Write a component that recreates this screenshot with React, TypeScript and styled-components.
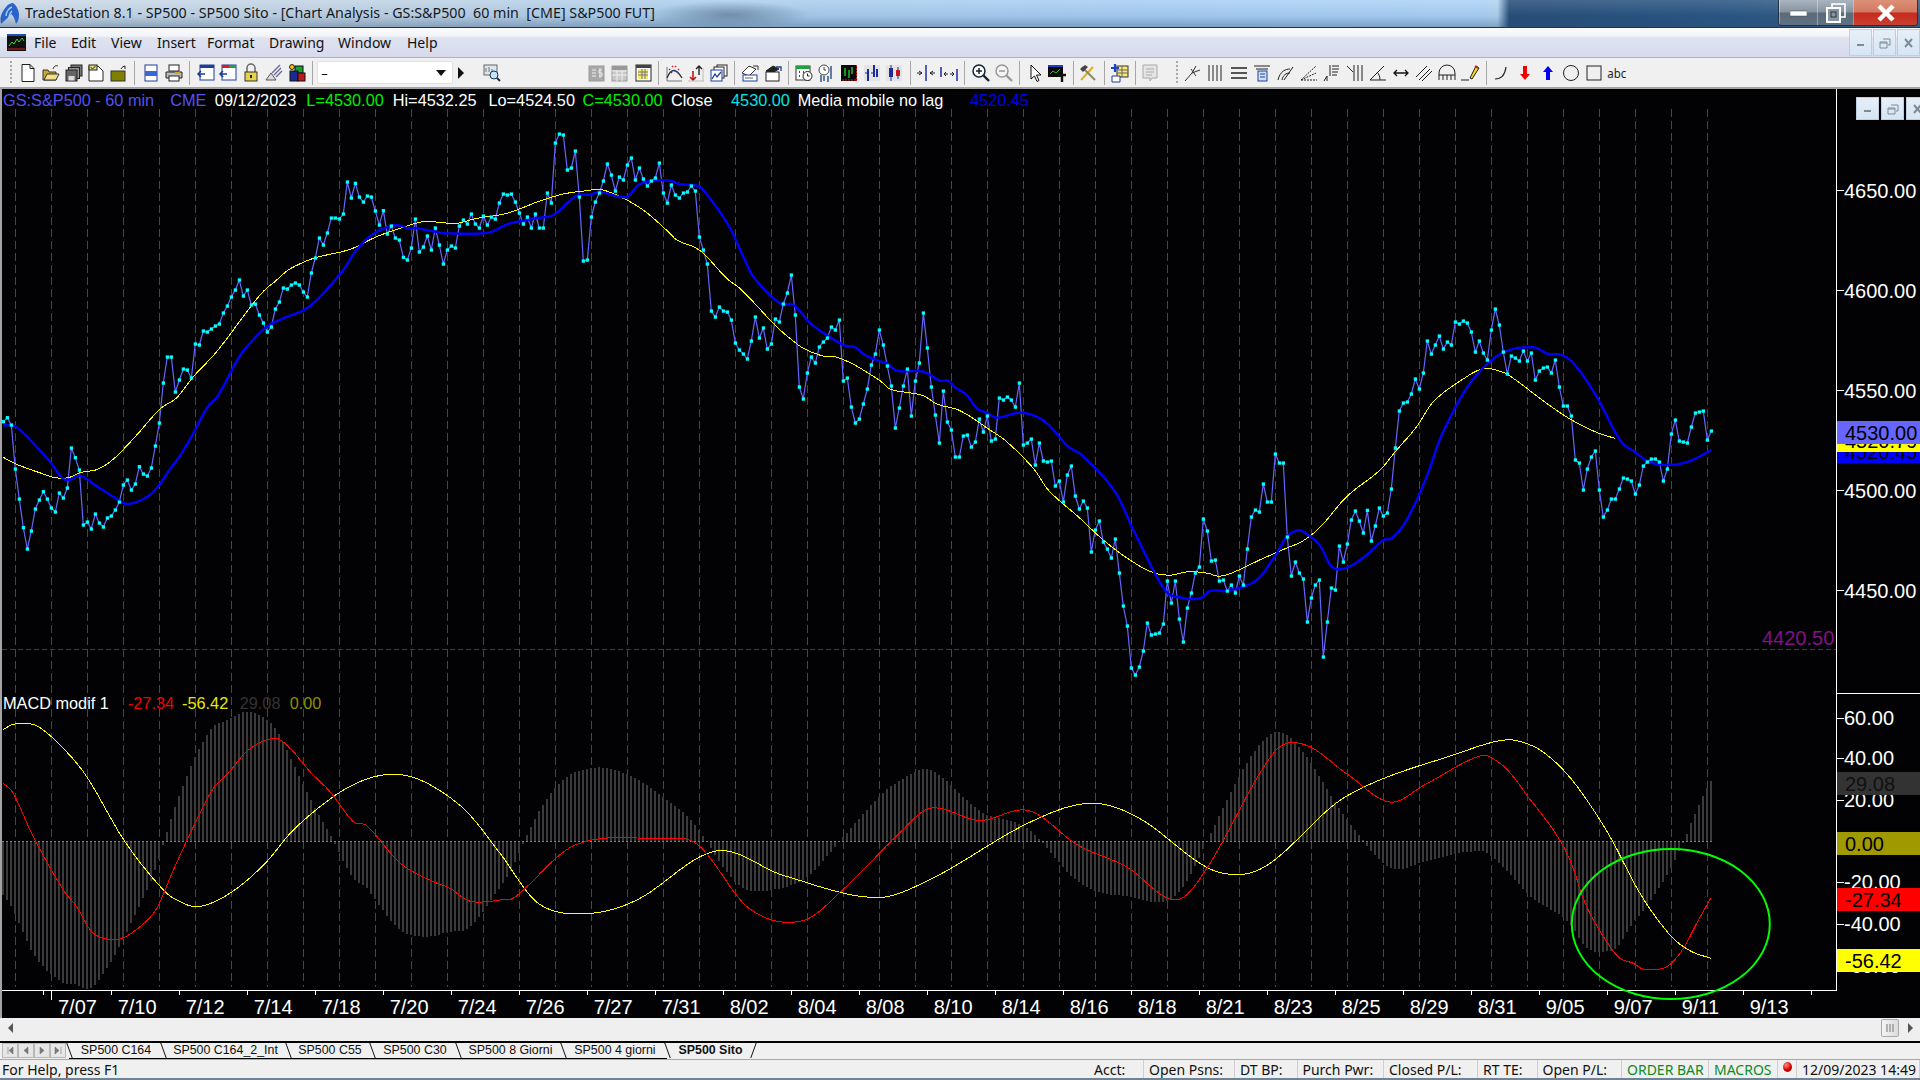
import * as React from "react";
import styled, { createGlobalStyle } from "styled-components";

const GlobalStyle = createGlobalStyle`
	html, body {
		margin: 0;
		padding: 0;
		overflow: hidden;
		background: #000;
	}
`;

const Desktop = styled.div`
	width: 1920px;
	height: 1080px;
	display: flex;
	flex-direction: column;
	overflow: hidden;
	font-family: "Noto Sans", "Liberation Sans", sans-serif;
`;

/* ---------- title bar ---------- */

const TitleBar = styled.div`
	height: 28px;
	flex: none;
	display: flex;
	align-items: flex-start;
	box-sizing: border-box;
	border-bottom: 1px solid #27323d;
	background:
		radial-gradient(ellipse 80px 14px at 730px 15px, rgba(70, 95, 125, 0.55), transparent),
		linear-gradient(180deg, rgba(255, 255, 255, 0.18), rgba(110, 140, 175, 0.12) 60%, rgba(60, 90, 125, 0.4) 100%),
		linear-gradient(90deg, #c9d8e6 0, #bcd0e2 20%, #a9cbea 35%, #a4ccf3 60%, #a9d0f6 77%, #aed0ee 78%, #1c4470 78.6%, #1f4c7c 90%, #35597d 100%);
`;

const TitleIcon = styled.svg`
	width: 20px;
	height: 24px;
	margin: 2px 0 0 0;
	flex: none;
`;

const TitleText = styled.div`
	flex: 1;
	margin: 3px 0 0 5px;
	font-size: 14.28px;
	line-height: 20px;
	color: #14181c;
	white-space: pre;
`;

const WindowButtons = styled.div`
	display: flex;
	height: 25px;
	margin-right: 2px;
	border: 1px solid rgba(30, 40, 55, 0.8);
	border-top: none;
	border-radius: 0 0 4px 4px;
	overflow: hidden;
`;

const WindowButton = styled.div<{ $w: number; $close?: boolean }>`
	width: ${p => p.$w}px;
	display: flex;
	align-items: center;
	justify-content: center;
	border-left: 1px solid rgba(255, 255, 255, 0.35);
	background: ${p =>
		p.$close
			? "linear-gradient(180deg, #dd9078 0, #d0795f 48%, #c9281e 52%, #c8402f 100%)"
			: "linear-gradient(180deg, #a9b4c0 0, #86939f 48%, #5b6a78 52%, #5e7184 100%)"};
`;

/* ---------- menu ---------- */

const MenuBar = styled.div`
	height: 30px;
	flex: none;
	display: flex;
	align-items: center;
	box-sizing: border-box;
	padding-left: 7px;
	border-bottom: 1px solid #aeb3bd;
	background: linear-gradient(180deg, #fbfbfd 0, #f3f4f8 28%, #dfe2f0 34%, #d6daec 100%);
`;

const MenuIcon = styled.svg`
	width: 19px;
	height: 17px;
	flex: none;
	margin-right: 8px;
`;

const MenuItem = styled.span<{ $w: number }>`
	width: ${p => p.$w}px;
	font-size: 14px;
	color: #111;
`;

const MdiButtons = styled.div`
	margin-left: auto;
	display: flex;
	gap: 1px;
	height: 27px;
`;

const MdiButton = styled.div`
	width: 23px;
	display: flex;
	align-items: center;
	justify-content: center;
	background: linear-gradient(180deg, #e6eff8, #d6e5f3);
	border: 1px solid #b9cfe2;
	box-sizing: border-box;
`;

/* ---------- toolbar ---------- */

const Toolbar = styled.div`
	height: 31px;
	flex: none;
	display: flex;
	align-items: center;
	box-sizing: border-box;
	border-bottom: 2px solid #a3a3a3;
	background: #f0f0f0;
`;

const Grip = styled.div<{ $ml: number; $mr: number }>`
	width: 6px;
	height: 24px;
	flex: none;
	margin: 0 ${p => p.$mr}px 0 ${p => p.$ml}px;
	background: repeating-linear-gradient(180deg, #a8a8a8 0 2px, transparent 2px 4px) center / 2px 100% no-repeat;
`;

const ToolButton = styled.div<{ $wide?: boolean; $ml?: number }>`
	width: ${p => (p.$wide ? 23.1 : 22.7)}px;
	margin-left: ${p => p.$ml || 0}px;
	height: 24px;
	flex: none;
	display: flex;
	align-items: center;
	justify-content: center;
`;

const ToolSvg = styled.svg`
	width: 20px;
	height: 20px;
`;

const AbcLabel = styled.span`
	font-size: 13px;
	color: #222;
	transform: scaleX(0.88);
`;

const ToolSep = styled.div<{ $narrow?: boolean }>`
	width: ${p => (p.$narrow ? 8.3 : 9.3)}px;
	height: 24px;
	flex: none;
	position: relative;
	&::before {
		content: "";
		position: absolute;
		left: 4px;
		top: 0;
		bottom: 0;
		width: 1px;
		background: #a6a6a6;
	}
`;

const Combo = styled.div`
	width: 136px;
	height: 23px;
	flex: none;
	box-sizing: border-box;
	display: flex;
	align-items: center;
	justify-content: space-between;
	padding: 0 6px 0 3px;
	background: #fff;
	border: 1px solid #e2e2e2;
	border-radius: 2px;
	font-size: 13px;
	color: #111;
`;

const ComboArrow = styled.span`
	width: 0;
	height: 0;
	border-left: 5px solid transparent;
	border-right: 5px solid transparent;
	border-top: 6px solid #111;
`;

const NextArrow = styled.span`
	width: 0;
	height: 0;
	margin: 0 9px 0 5px;
	flex: none;
	border-top: 6px solid transparent;
	border-bottom: 6px solid transparent;
	border-left: 6px solid #111;
`;

/* ---------- chart ---------- */

const ChartArea = styled.div`
	height: 929px;
	flex: none;
	position: relative;
	overflow: hidden;
	background: #020204;
`;

const ChartSvg = styled.svg`
	display: block;
	width: 1920px;
	height: 929px;
	font-family: "Liberation Sans", Arial, sans-serif;
`;

const Legend = styled.div<{ $top: number }>`
	position: absolute;
	left: 3px;
	top: ${p => p.$top}px;
	display: flex;
	font-family: "Liberation Sans", Arial, sans-serif;
	font-size: 16.3px;
	line-height: 20px;
	white-space: nowrap;
`;

const LegendItem = styled.span<{ $color: string; $gap?: number }>`
	color: ${p => p.$color};
	margin-left: ${p => p.$gap || 0}px;
`;

const ChildButtons = styled.div`
	position: absolute;
	right: -9px;
	top: 8px;
	display: flex;
	gap: 2px;
`;

const ChildButton = styled(MdiButton)`
	height: 23px;
	width: 23px;
`;

/* ---------- scrollbar, tabs, status ---------- */

const ScrollBar = styled.div`
	height: 23px;
	flex: none;
	display: flex;
	align-items: center;
	box-sizing: border-box;
	padding: 0 7px 3px 8px;
	background: #efefef;
`;

const ScrollThumb = styled.div`
	width: 18px;
	height: 18px;
	box-sizing: border-box;
	margin-left: auto;
	display: flex;
	align-items: center;
	justify-content: center;
	background: linear-gradient(90deg, #f4f4f4, #dcdcdc);
	border: 1px solid #a9a9a9;
	border-radius: 2px;
`;

const ScrollArrow = styled.span<{ $right?: boolean }>`
	width: 0;
	height: 0;
	margin-left: ${p => (p.$right ? 9 : 0)}px;
	border-top: 5px solid transparent;
	border-bottom: 5px solid transparent;
	${p => (p.$right ? "border-left: 5px solid #555;" : "border-right: 5px solid #555;")}
`;

const TabStrip = styled.div`
	height: 18px;
	flex: none;
	display: flex;
	box-sizing: border-box;
	border-top: 2px solid #000;
	background: #f0f0f0;
	padding-left: 2px;
`;

const TabNav = styled.div`
	width: 16px;
	height: 15px;
	box-sizing: border-box;
	flex: none;
	display: flex;
	align-items: center;
	justify-content: center;
	background: #e6e6e6;
	border: 1px solid #b8b8b8;
`;

const TabRow = styled.div`
	display: flex;
	margin-left: 3px;
`;

const Tab = styled.div<{ $w: number; $active?: boolean }>`
	position: relative;
	width: ${p => p.$w}px;
	flex: none;
	box-sizing: border-box;
	text-align: center;
	font-family: "Liberation Sans", Arial, sans-serif;
	font-size: 12.4px;
	line-height: 15px;
	font-weight: ${p => (p.$active ? 700 : 400)};
	color: #111;
	border-bottom: 1px solid ${p => (p.$active ? "#f0f0f0" : "#000")};
	&::before {
		content: "";
		position: absolute;
		left: 0;
		top: 0;
		bottom: 0;
		width: 1px;
		background: #111;
		transform: skewX(20deg);
	}
	${p =>
		p.$active &&
		`&::after {
			content: "";
			position: absolute;
			right: 0;
			top: 0;
			bottom: 0;
			width: 1px;
			background: #111;
			transform: skewX(-20deg);
		}`}
`;

const StatusBar = styled.div`
	height: 19px;
	flex: none;
	display: flex;
	align-items: center;
	box-sizing: border-box;
	padding-left: 2px;
	background: #f0f0f0;
	border-top: 1px solid #a8a8a8;
	font-size: 14px;
	color: #111;
`;

const StatusHelp = styled.div`
	flex: 1;
`;

const StatusCell = styled.div<{ $w: number; $green?: boolean }>`
	width: ${p => p.$w}px;
	height: 100%;
	flex: none;
	box-sizing: border-box;
	display: flex;
	align-items: center;
	padding-left: 5px;
	white-space: nowrap;
	border-right: 1px solid #cfcfcf;
	color: ${p => (p.$green ? "#0f8a1f" : "#111")};
`;

const RedDot = styled.span`
	width: 9px;
	height: 10px;
	margin-top: -4px;
	border-radius: 50%;
	background: radial-gradient(circle at 35% 30%, #ff8a8a, #d40000 55%, #700);
`;

const BottomEdge = styled.div`
	height: 2px;
	flex: none;
	background: #6f8296;
`;

/* ---------- chart data, sampled from the picture at 3x ---------- */

const closesTop = [
	905, 893, 915, 1047, 1137, 1223, 1287, 1233, 1167, 1140, 1115, 1137, 1164, 1176, 1119, 1134, 1104, 984, 1013, 1050,
	1215, 1206, 1227, 1182, 1209, 1221, 1194, 1188, 1170, 1146, 1095, 1080, 1110, 1092, 1040, 1062, 1068, 1044, 978, 909,
	789, 711, 711, 816, 780, 747, 750, 774, 672, 675, 633, 636, 627, 618, 612, 579, 558, 531, 510, 480, 528, 510, 555,
	552, 585, 609, 636, 621, 567, 546, 504, 507, 495, 489, 495, 516, 531, 459, 414, 354, 375, 339, 294, 294, 297, 282,
	186, 234, 190, 231, 246, 228, 231, 273, 315, 272, 342, 318, 354, 360, 412, 420, 384, 297, 396, 381, 348, 390, 324,
	375, 432, 390, 378, 384, 318, 300, 312, 282, 312, 324, 288, 315, 291, 297, 249, 222, 225, 222, 246, 279, 312, 291,
	324, 282, 324, 324, 219, 249, 69, 42, 45, 150, 144, 93, 231, 423, 420, 291, 246, 219, 183, 132, 165, 213, 171, 180,
	135, 114, 180, 144, 177, 198, 183, 174, 129, 219, 249, 195, 225, 234, 219, 216, 198, 213, 351, 390, 432, 573, 591,
	561, 573, 576, 600, 669, 690, 702, 717, 663, 591, 654, 624, 687, 672, 597, 606, 552, 519, 465, 585, 801, 837, 759,
	711, 729, 681, 666, 654, 621, 630, 600, 783, 774, 861, 909, 897, 852, 807, 735, 702, 630
];

const closesBottom = [
	195, 258, 318, 444, 384, 318, 267, 408, 303, 249, 99, 204, 321, 405, 489, 333, 426, 450, 531, 531, 468, 465, 501, 486,
	417, 456, 408, 483, 477, 354, 360, 351, 360, 381, 309, 495, 489, 477, 555, 489, 543, 546, 543, 618, 603, 666, 585,
	558, 648, 687, 663, 684, 816, 750, 723, 786, 807, 834, 777, 879, 978, 1038, 1164, 1185, 1161, 1113, 1029, 1065, 1062,
	1059, 1032, 903, 969, 903, 1017, 1086, 984, 939, 879, 861, 717, 753, 843, 840, 903, 900, 933, 915, 939, 888, 915, 807,
	711, 690, 696, 612, 666, 666, 522, 549, 549, 771, 888, 846, 879, 897, 1026, 954, 915, 900, 1131, 1026, 924, 930, 798,
	846, 792, 720, 693, 723, 759, 691, 783, 738, 684, 708, 699, 627, 504, 393, 369, 366, 342, 297, 327, 279, 183, 222,
	195, 168, 207, 186, 195, 126, 132, 123, 129, 156, 216, 183, 219, 240, 150, 87, 135, 216, 282, 228, 234, 243, 213, 243,
	219, 300, 273, 264, 261, 279, 240, 321, 378, 378, 408, 540, 549, 630, 567, 531, 513, 630, 711, 690, 657, 657, 627,
	594, 597, 603, 642, 615, 558, 546, 537, 537, 546, 603, 567, 462, 420, 483, 486, 489, 441, 399, 396, 393, 480, 453
];

type Pt = [number, number];

const crop = (ox: number, oy: number, pts: Pt[]): Pt[] => pts.map(([x, y]) => [ox + x / 3, oy + y / 3] as Pt);
const full = (pts: Pt[]): Pt[] => pts.map(([x, y]) => [x * 1.2245, y * 1.2245] as Pt);

// hermite through the anchors, sampled every 2px, so the averages come out as curves
const smooth = (pts: Pt[]): Pt[] => {
	const slope = (i: number) => {
		const a = pts[Math.max(i - 1, 0)];
		const b = pts[Math.min(i + 1, pts.length - 1)];
		return (b[1] - a[1]) / (b[0] - a[0]);
	};
	const out: Pt[] = [pts[0]];
	for (let i = 0; i < pts.length - 1; i++) {
		const [x0, y0] = pts[i];
		const [x1, y1] = pts[i + 1];
		const d = x1 - x0;
		const n = Math.max(1, Math.round(d / 2));
		for (let k = 1; k <= n; k++) {
			const t = k / n;
			const h00 = 2 * t * t * t - 3 * t * t + 1;
			const h10 = t * t * t - 2 * t * t + t;
			const h01 = -2 * t * t * t + 3 * t * t;
			const h11 = t * t * t - t * t;
			out.push([x0 + d * t, h00 * y0 + h10 * d * slope(i) + h01 * y1 + h11 * d * slope(i + 1)]);
		}
	}
	return out;
};

const closes: Pt[] = [...closesTop.map(y => 120 + y / 3), ...closesBottom.map(y => 280 + y / 3)].map(
	(y, i) => [3.33 + i * 4, y] as Pt
);

const blueAvg = smooth([
	...crop(0, 120, [
		[10, 917], [30, 915], [55, 925], [150, 1025], [185, 1073], [205, 1080], [240, 1067], [285, 1095], [355, 1140],
		[380, 1152], [430, 1137], [470, 1105], [515, 1040], [535, 1015], [580, 940], [620, 865], [655, 825], [715, 715],
		[745, 675], [800, 620], [850, 595], [930, 558], [1030, 450], [1065, 395], [1115, 345], [1175, 317], [1200, 317],
		[1225, 325], [1250, 325], [1320, 338]
	]),
	...crop(440, 120, [
		[10, 340], [145, 338], [205, 312], [300, 293], [340, 285], [410, 227], [450, 224], [480, 216], [560, 231], [595, 195],
		[640, 182], [690, 182], [720, 192], [770, 197], [790, 210], [865, 315], [910, 410], [940, 470], [1020, 550],
		[1060, 555], [1115, 613], [1210, 675], [1245, 682], [1275, 705], [1320, 724]
	]),
	...crop(880, 280, [
		[20, 250], [50, 272], [130, 275], [180, 302], [205, 302], [225, 322], [260, 345], [290, 385], [320, 398], [350, 413],
		[425, 398], [495, 425], [565, 500], [605, 525], [705, 635], [765, 760], [855, 930], [905, 953], [960, 955], [990, 933],
		[1040, 932], [1130, 900], [1190, 820], [1220, 770], [1250, 752], [1270, 755], [1320, 797]
	]),
	...crop(1200, 280, [
		[395, 860], [440, 863], [500, 825], [550, 780], [575, 775], [620, 720], [680, 590], [725, 465], [810, 310], [905, 220],
		[1000, 202], [1045, 222], [1085, 225], [1125, 255], [1190, 350], [1260, 480]
	]),
	...crop(1500, 280, [[410, 520], [445, 545], [505, 555], [570, 543], [634, 510]])
]);

const yellowAvg = smooth([
	...crop(0, 120, [
		[10, 1012], [50, 1033], [130, 1062], [165, 1073], [205, 1073], [240, 1058], [295, 1047], [345, 1013], [410, 945],
		[480, 867], [530, 833], [580, 770], [650, 695], [780, 525], [830, 480], [865, 450], [910, 427], [950, 412], [1050, 388],
		[1130, 350], [1210, 322], [1270, 305], [1320, 307]
	]),
	...crop(440, 120, [
		[45, 311], [110, 295], [200, 280], [300, 243], [370, 222], [440, 212], [485, 209], [560, 240], [620, 278], [690, 340],
		[710, 360], [780, 392], [860, 475], [905, 510], [1010, 620], [1075, 675], [1100, 690], [1150, 708], [1185, 710],
		[1240, 733], [1320, 782]
	]),
	...crop(880, 280, [
		[30, 327], [130, 347], [170, 372], [240, 392], [330, 450], [380, 485], [460, 565], [505, 630], [600, 715], [670, 780],
		[750, 840], [820, 878], [875, 885], [925, 875], [985, 880], [1010, 888], [1045, 883], [1150, 835], [1230, 800],
		[1265, 785], [1320, 742]
	]),
	...crop(1200, 280, [
		[440, 650], [540, 570], [590, 510], [650, 440], [700, 365], [800, 290], [850, 265], [880, 268], [925, 285], [1040, 370],
		[1115, 420], [1190, 457], [1245, 475]
	])
]);

const macdRed = smooth([
	...crop(0, 680, [
		[10, 310], [40, 340], [100, 470], [190, 630], [230, 680], [275, 755], [325, 778], [365, 775], [420, 740], [470, 685],
		[520, 570], [590, 420], [640, 325], [680, 285], [745, 210], [825, 175], [870, 205], [930, 275], [990, 335], [1060, 425],
		[1100, 437], [1190, 540], [1230, 570], [1300, 605], [1350, 625], [1400, 660], [1440, 666], [1500, 660]
	]),
	...full([
		[420, 733], [470, 690], [540, 685], [570, 690], [612, 742], [655, 752], [690, 725], [735, 680], [760, 660], [800, 670],
		[840, 662], [880, 690], [920, 708], [960, 735], [985, 710], [1040, 615], [1065, 608], [1100, 632], [1135, 655],
		[1165, 640], [1210, 617]
	]),
	...crop(1500, 680, [
		[0, 250], [40, 290], [80, 345], [160, 450], [210, 540], [260, 680], [330, 800], [360, 835], [400, 850], [430, 867],
		[500, 860], [550, 805], [590, 730], [632, 655]
	])
]);

const macdYellow = smooth([
	...crop(0, 680, [
		[10, 148], [40, 133], [80, 130], [120, 143], [190, 205], [260, 290], [375, 485], [490, 630], [540, 665], [590, 680],
		[650, 662], [720, 618], [800, 545], [880, 450], [1000, 350], [1080, 305], [1150, 285], [1220, 287], [1300, 320],
		[1400, 395], [1500, 520]
	]),
	...full([
		[440, 738], [480, 746], [520, 735], [585, 695], [640, 715], [715, 733], [760, 718], [840, 672], [890, 656], [930, 668],
		[985, 708], [1015, 714], [1040, 703], [1100, 650], [1200, 612]
	]),
	...crop(1500, 680, [
		[0, 182], [50, 182], [120, 210], [190, 270], [250, 345], [330, 470], [420, 640], [510, 765], [570, 812], [632, 835]
	])
]);

const toPath = (pts: Pt[]) => pts.map(([x, y]) => `${x.toFixed(1)},${y.toFixed(1)}`).join(" ");

const valueAt = (pts: Pt[], x: number) => {
	for (let i = 1; i < pts.length; i++) {
		if (x <= pts[i][0]) {
			const [x0, y0] = pts[i - 1];
			const [x1, y1] = pts[i];
			return y0 + ((y1 - y0) * (x - x0)) / (x1 - x0);
		}
	}
	return pts[pts.length - 1][1];
};

const ZERO_Y = 841;
const histogram = closes.map(([x]) => {
	const tip = ZERO_Y + valueAt(macdRed, x) - valueAt(macdYellow, x);
	return { x, y: Math.min(tip, ZERO_Y), h: Math.abs(tip - ZERO_Y) };
});

const gridXs = Array.from({ length: 48 }, (_, i) => 15.33 + 36 * i);
const tickXs = Array.from({ length: 27 }, (_, i) => 43.67 + 68 * i);
const dates = [
	"7/10", "7/12", "7/14", "7/18", "7/20", "7/24", "7/26", "7/27", "7/31", "8/02", "8/04", "8/08", "8/10", "8/14", "8/16",
	"8/18", "8/21", "8/23", "8/25", "8/29", "8/31", "9/05", "9/07", "9/11", "9/13"
];

const priceTicks = [
	{ y: 190.7, label: "4650.00" },
	{ y: 290.7, label: "4600.00" },
	{ y: 390.7, label: "4550.00" },
	{ y: 490.7, label: "4500.00" },
	{ y: 590.7, label: "4450.00" }
];

const macdTicks = [
	{ y: 718, label: "60.00" },
	{ y: 758, label: "40.00" },
	{ y: 800, label: "20.00" },
	{ y: 882, label: "-20.00" },
	{ y: 924, label: "-40.00" },
	{ y: 966, label: "-60.00" }
];

const tags = [
	{ y: 440, fill: "#0000ff", text: "#000", label: "4520.45" },
	{ y: 429, fill: "#ffff00", text: "#000", label: "4520.79" },
	{ y: 421, fill: "#6666ff", text: "#000", label: "4530.00" },
	{ y: 772, fill: "#333333", text: "#111", label: "29.08" },
	{ y: 832, fill: "#a09a00", text: "#000", label: "0.00" },
	{ y: 888, fill: "#ff0000", text: "#000", label: "-27.34" },
	{ y: 949, fill: "#ffff00", text: "#000", label: "-56.42" }
];

const Chart = () => (
	<ChartSvg viewBox="0 89 1920 929">
		<rect x="0" y="89" width="2" height="929" fill="#a4a4a4" />
		<g stroke="#464646" strokeDasharray="8 4" shapeRendering="crispEdges">
			{gridXs.map(x => (
				<line key={x} x1={x} x2={x} y1="109" y2="987" />
			))}
		</g>
		<line x1="2" x2="1836" y1="649" y2="649" stroke="#7d0f7d" strokeDasharray="5 3" shapeRendering="crispEdges" />

		<polyline points={toPath(closes)} fill="none" stroke="#6666ff" strokeWidth="1.2" />
		<polyline points={toPath(yellowAvg)} fill="none" stroke="#ffff00" strokeWidth="1" shapeRendering="crispEdges" />
		<polyline points={toPath(blueAvg)} fill="none" stroke="#0000ff" strokeWidth="2.4" />
		<g fill="#00ffff">
			{closes.map(([x, y]) => (
				<rect key={x} x={x - 1.6} y={y - 1.6} width="3.3" height="3.3" />
			))}
		</g>

		<g fill="#3a3a3a" shapeRendering="crispEdges">
			{histogram.map(b => (
				<rect key={b.x} x={b.x - 1} y={b.y} width="2" height={b.h} />
			))}
		</g>
		<line x1="2" x2="1713" y1={ZERO_Y} y2={ZERO_Y} stroke="#8f8f00" strokeDasharray="2 2" shapeRendering="crispEdges" />
		<polyline points={toPath(macdYellow)} fill="none" stroke="#ffff00" strokeWidth="1" shapeRendering="crispEdges" />
		<polyline points={toPath(macdRed)} fill="none" stroke="#ff0000" strokeWidth="1" shapeRendering="crispEdges" />

		<g stroke="#fff" shapeRendering="crispEdges">
			<line x1="2" x2="1837" y1="990" y2="990" />
			<line x1="1836.5" x2="1836.5" y1="89" y2="990" />
			<line x1="1836" x2="1920" y1="693" y2="693" />
			<line x1="51.7" x2="51.7" y1="990" y2="1000" />
			{tickXs.map(x => (
				<line key={x} x1={x} x2={x} y1="990" y2="995" />
			))}
			{[...priceTicks, ...macdTicks].map(t => (
				<line key={t.label} x1="1837" x2="1844" y1={t.y} y2={t.y} />
			))}
		</g>

		<g fill="#fff" fontSize="20">
			<text x="58" y="1014">7/07</text>
			{dates.map((d, i) => (
				<text key={d} x={tickXs[i + 1] + 6} y="1014">{d}</text>
			))}
			{[...priceTicks, ...macdTicks].map(t => (
				<text key={t.label} x="1844" y={t.y + 7}>{t.label}</text>
			))}
		</g>
		<text x="1762" y="645" fill="#84108a" fontSize="20">4420.50</text>

		{tags.map(t => (
			<g key={t.label} fontSize="20">
				<rect x="1837" y={t.y} width="83" height="23" fill={t.fill} />
				<text x="1845" y={t.y + 18.5} fill={t.text}>{t.label}</text>
			</g>
		))}

		<ellipse cx="1670.8" cy="924" rx="99" ry="75" fill="none" stroke="#00ff00" strokeWidth="2" />
	</ChartSvg>
);

/* ---------- toolbar icons ---------- */

const icons: Record<string, React.ReactNode> = {
	newDoc: <path d="M4 1.5h8l4 4v13H4zM12 1.5v4h4" fill="#fff" stroke="#222" />,
	open: (
		<>
			<path d="M2 7h5l1 2h7v8H2z" fill="#c8a830" stroke="#333" />
			<path d="M3 17l3-6h12l-3 6z" fill="#f3e08a" stroke="#333" />
			<path d="M12 6c1-3 3-4 5-3" fill="none" stroke="#222" />
		</>
	),
	saveAll: (
		<>
			<rect x="7" y="2" width="11" height="11" fill="#777" stroke="#222" />
			<rect x="4.5" y="4.5" width="11" height="11" fill="#999" stroke="#222" />
			<rect x="2" y="7" width="11" height="11" fill="#666" stroke="#222" />
			<rect x="4.5" y="13" width="6" height="4.5" fill="#ddd" />
		</>
	),
	docCheck: (
		<>
			<path d="M3 3h9l5 5v10H3z" fill="#fff" stroke="#222" />
			<rect x="3" y="2" width="8" height="5" fill="#e8dc70" stroke="#222" />
			<path d="M4.5 4l2 2 3-3" fill="none" stroke="#222" />
		</>
	),
	olive: (
		<>
			<rect x="2" y="8" width="14" height="10" fill="#808000" stroke="#333" />
			<path d="M12 6c1-2 3-3 4-3M16 3v3" fill="none" stroke="#222" />
		</>
	),
	preview: (
		<>
			<rect x="4" y="2" width="12" height="16" fill="#fff" stroke="#1c3f9a" />
			<rect x="4" y="8" width="12" height="5" fill="#3a66d8" />
		</>
	),
	print: (
		<>
			<rect x="5" y="2" width="10" height="6" fill="#fff" stroke="#222" />
			<path d="M2 9h16v6H2z" fill="#bbb" stroke="#222" />
			<rect x="5" y="13" width="10" height="5" fill="#fff" stroke="#222" />
			<path d="M11 10h5" stroke="#e0a020" strokeWidth="2" />
		</>
	),
	winBlue: (
		<>
			<rect x="4" y="2" width="14" height="15" fill="#fff" stroke="#1c3f9a" />
			<rect x="4" y="2" width="14" height="3" fill="#1c3f9a" />
			<path d="M2 11h7M5 8l-3 3 3 3" fill="none" stroke="#1c3f9a" strokeWidth="1.5" />
		</>
	),
	winGreen: (
		<>
			<rect x="4" y="2" width="14" height="15" fill="#fff" stroke="#1c3f9a" />
			<rect x="4" y="2" width="7" height="3" fill="#d02020" />
			<rect x="11" y="2" width="7" height="3" fill="#20a040" />
			<path d="M2 11h7M5 8l-3 3 3 3" fill="none" stroke="#1c3f9a" strokeWidth="1.5" />
		</>
	),
	lock: (
		<>
			<path d="M6 9V5a4 4 0 0 1 8 0v4" fill="none" stroke="#666" strokeWidth="1.5" />
			<rect x="4" y="9" width="12" height="9" fill="#e4d24a" stroke="#333" />
			<rect x="9" y="12" width="2" height="3" fill="#222" />
		</>
	),
	satellite: (
		<>
			<path d="M2 17l5-7 5 7z" fill="#ddd" stroke="#555" />
			<path d="M8 10l8-8M10 12l7-7M12 14l6-6" stroke="#6a6a9a" strokeWidth="1.4" />
		</>
	),
	blocks: (
		<>
			<rect x="8" y="3" width="8" height="7" fill="#18a030" stroke="#111" />
			<rect x="3" y="8" width="8" height="10" fill="#1a2a90" stroke="#111" />
			<rect x="11" y="10" width="7" height="8" fill="#c01818" stroke="#111" />
			<circle cx="5" cy="4" r="2.4" fill="#ffd400" stroke="#111" />
		</>
	),
	chartFind: (
		<>
			<rect x="2" y="2" width="13" height="10" fill="#dde6ee" stroke="#666" />
			<path d="M4 9V5M7 9V4M10 9V6" stroke="#777" />
			<circle cx="12" cy="12" r="4" fill="#bfe6ff" stroke="#234" />
			<path d="M15 15l3 3" stroke="#234" strokeWidth="2" />
		</>
	),
	grayCalc: (
		<>
			<rect x="2" y="3" width="15" height="15" fill="#a8a8a8" stroke="#999" />
			<path d="M5 7h4M5 10h4M5 13h4" stroke="#eee" />
			<path d="M13 5v10M15 7h-3v3h3v3h-3" fill="none" stroke="#eee" />
		</>
	),
	grayTable: (
		<>
			<rect x="2" y="3" width="15" height="15" fill="#c8c8c8" stroke="#999" />
			<path d="M2 8h15M2 12h15M7 8v10M12 8v10" stroke="#f0f0f0" />
			<rect x="2" y="3" width="15" height="4" fill="#999" />
		</>
	),
	yellowTable: (
		<>
			<rect x="3" y="2" width="15" height="16" fill="#fff" stroke="#222" />
			<rect x="5" y="6" width="10" height="10" fill="#f6ea70" />
			<path d="M5 9h10M5 12h10M9 6v10M12 6v10" stroke="#777" />
			<rect x="3" y="2" width="15" height="3" fill="#444" />
		</>
	),
	redWave: (
		<>
			<path d="M3 4v14h15" fill="none" stroke="#777" />
			<path d="M3 15c4-10 9-10 15 0" fill="none" stroke="#333" strokeWidth="1.3" />
			<path d="M5 6l1 1M8 3l1 1M11 3l1 1M14 6l1 1" stroke="#d02020" strokeWidth="1.6" />
			<path d="M7 9l1 1M10 7l1 1M13 9l1 1" stroke="#3040c0" strokeWidth="1.6" />
		</>
	),
	arrows: (
		<>
			<path d="M7 17V8M4 14l3 3 3-3" fill="none" stroke="#c01818" strokeWidth="1.6" />
			<path d="M13 12V3M10 6l3-3 3 3" fill="none" stroke="#222" strokeWidth="1.4" />
			<path d="M2 18h16M17 5v13" stroke="#bbb" />
		</>
	),
	stack: (
		<>
			<rect x="8" y="2" width="10" height="11" fill="#fff" stroke="#222" />
			<rect x="5" y="4" width="10" height="11" fill="#fff" stroke="#222" />
			<rect x="2" y="7" width="11" height="11" fill="#fff" stroke="#1c3f9a" />
			<path d="M3 16l3-5 2 3 4-5" fill="none" stroke="#1c3f9a" strokeWidth="1.3" />
		</>
	),
	docArrow: (
		<>
			<path d="M2 10l7-7 7 3-7 7z" fill="#fff" stroke="#333" />
			<rect x="3" y="12" width="14" height="6" fill="#fff" stroke="#1c3f9a" />
			<path d="M5 15h8" stroke="#666" />
			<path d="M13 3h5v4" fill="none" stroke="#333" />
		</>
	),
	boxArrow: (
		<>
			<path d="M3 8l7-5 6 3-7 4z" fill="#222" stroke="#222" />
			<rect x="3" y="9" width="13" height="9" fill="#fff" stroke="#222" />
			<path d="M13 4h5v4" fill="none" stroke="#1c3f9a" strokeWidth="1.3" />
		</>
	),
	calClock: (
		<>
			<rect x="2" y="3" width="14" height="14" fill="#fff" stroke="#333" />
			<rect x="2" y="3" width="14" height="3" fill="#20a040" />
			<path d="M5 9h1M9 9h1M5 13h1" stroke="#c01818" strokeWidth="2" />
			<circle cx="13.5" cy="13" r="4.5" fill="#fff" stroke="#222" />
			<path d="M13.5 10.5V13h2" fill="none" stroke="#222" />
		</>
	),
	clockBars: (
		<>
			<circle cx="8" cy="7" r="5" fill="#fff" stroke="#444" />
			<path d="M8 4v3h2" fill="none" stroke="#444" />
			<path d="M5 19v-7M8 18v-5M15 16V3M12 19v-6" stroke="#34558a" strokeWidth="1.5" />
		</>
	),
	darkBars: (
		<>
			<rect x="2" y="2" width="16" height="16" fill="#0a0a0a" />
			<path d="M6 5v8M10 7v8M13 4v7" stroke="#22c030" strokeWidth="1.5" />
			<path d="M17.5 2v16M3 17h14" stroke="#d01818" strokeWidth="1" strokeDasharray="2 1" />
		</>
	),
	blueBars: (
		<>
			<rect x="2" y="2" width="16" height="16" fill="#e4e4e4" />
			<path d="M6 6v12M12 2v12M15 6v8" stroke="#1c2c9a" strokeWidth="2" />
			<path d="M3 10h3M12 10h-3" stroke="#1c2c9a" />
		</>
	),
	candle: (
		<>
			<rect x="2" y="2" width="16" height="16" fill="#e4e4e4" />
			<path d="M7 2v16M14 4v12" stroke="#1c2c9a" />
			<rect x="5" y="5" width="4" height="9" fill="#1c2c9a" />
			<rect x="12" y="7" width="4" height="6" fill="#c01818" />
		</>
	),
	barsIn: (
		<>
			<path d="M10 2v16" stroke="#2a3aa8" strokeWidth="1.6" />
			<path d="M1 10h5M3 8l3 2-3 2M19 10h-5M17 8l-3 2 3 2" fill="none" stroke="#222" />
		</>
	),
	barsOut: (
		<>
			<path d="M2 4v10M18 6v12" stroke="#2a3aa8" strokeWidth="1.6" />
			<path d="M5 11h4M7 9l-2 2 2 2M15 11h-4M13 9l2 2-2 2" fill="none" stroke="#222" />
		</>
	),
	zoomIn: (
		<>
			<circle cx="8" cy="8" r="6" fill="#fff" stroke="#123" strokeWidth="1.5" />
			<path d="M5 8h6M8 5v6" stroke="#123" strokeWidth="1.5" />
			<path d="M12.5 12.5l5.5 5.5" stroke="#123" strokeWidth="2.4" />
		</>
	),
	zoomOut: (
		<>
			<circle cx="8" cy="8" r="6" fill="#f4f4f4" stroke="#999" strokeWidth="1.5" />
			<path d="M5 8h6" stroke="#999" strokeWidth="1.5" />
			<path d="M12.5 12.5l5.5 5.5" stroke="#999" strokeWidth="2.4" />
		</>
	),
	cursor: <path d="M6 2v14l3.5-3 2.5 5.5 2-1-2.5-5.5H16z" fill="#fff" stroke="#111" />,
	chartText: (
		<>
			<rect x="1" y="2" width="15" height="12" fill="#0a0a0a" />
			<rect x="1" y="2" width="15" height="2" fill="#2040c0" />
			<path d="M3 11l3-3 3 2 4-4" fill="none" stroke="#22c030" />
			<path d="M11 12h8M15 12v7" stroke="#111" strokeWidth="2.4" />
		</>
	),
	hammer: (
		<>
			<path d="M3 17L15 4" stroke="#e0b020" strokeWidth="2" />
			<path d="M4 4l13 13" stroke="#886" strokeWidth="2" />
			<path d="M2 6l5-4 3 2-5 5z" fill="#444" />
		</>
	),
	plusTable: (
		<>
			<rect x="8" y="3" width="11" height="11" fill="#f6ea70" stroke="#333" />
			<path d="M8 7h11M8 10h11M13 3v11" stroke="#666" />
			<path d="M6 1v8M2 5h8" stroke="#1c3fd0" strokeWidth="2.2" />
			<path d="M3 13h8v6H3z" fill="#fff" stroke="#1c3f9a" />
		</>
	),
	grayNote: (
		<>
			<path d="M3 2h14v13h-5l-2 3v-3H3z" fill="#e4e4e4" stroke="#aaa" />
			<path d="M6 6h8M6 9h8M6 12h6" stroke="#aaa" />
		</>
	),
	fork: <path d="M2 18l7-8M9 10l4-7M9 10l8-3M8 6l5 7" fill="none" stroke="#333" />,
	vLines: <path d="M3 2v16M7 2v16M11 2v16M15 2v16" stroke="#222" />,
	hLines: <path d="M2 5h16M2 10h16M2 15h16" stroke="#222" strokeWidth="1.4" />,
	calcLines: (
		<>
			<path d="M2 3h16M4 6h12" stroke="#222" />
			<rect x="6" y="8" width="9" height="10" fill="#cfe0f4" stroke="#1c3f9a" />
			<path d="M8 11h5M8 14h5" stroke="#1c3f9a" />
		</>
	),
	arcs: <path d="M2 17c2-9 8-11 12-11M6 17c1-5 4-7 8-7M17 4L8 17" fill="none" stroke="#222" />,
	fan: <path d="M2 17L17 3M2 17l15-7M2 17h16" fill="none" stroke="#222" strokeDasharray="2 1" />,
	steps: <path d="M2 18l3-5v5M8 13V2M10 3h7M10 6h7M10 9h6M10 12h5" fill="none" stroke="#222" />,
	triLines: <path d="M2 3l6 6M9 2v16M13 2v16M17 2v16" fill="none" stroke="#222" />,
	angle: <path d="M2 17L16 3M2 17h16M9 9c2 2 3 5 3 8" fill="none" stroke="#222" />,
	dblArrow: <path d="M3 10h14M6 7l-3 3 3 3M14 7l3 3-3 3" fill="none" stroke="#111" strokeWidth="1.3" />,
	parallel: <path d="M2 14L13 3M5 17L16 6M8 18L18 8" fill="none" stroke="#222" />,
	arches: <path d="M2 17V10a8 8 0 0 1 16 0v7M2 12h16M6 17v-5M10 17v-5M14 17v-5" fill="none" stroke="#222" />,
	pencil: (
		<>
			<path d="M1 17h8" stroke="#222" />
			<path d="M10 15l6-12 3 2-7 11z" fill="#f4d820" stroke="#222" />
			<path d="M15 3l3 2" stroke="#d02020" strokeWidth="2" />
		</>
	),
	curve: <path d="M3 16c7 0 10-4 11-12" fill="none" stroke="#222" strokeWidth="1.2" />,
	arrowDown: <path d="M8 3h4v8h3l-5 6-5-6h3z" fill="#f00000" />,
	arrowUp: <path d="M8 17h4V9h3l-5-6-5 6h3z" fill="#0000f0" />,
	circle: <circle cx="10" cy="10" r="7.5" fill="none" stroke="#222" />,
	square: <rect x="3" y="3" width="14" height="14" fill="none" stroke="#222" />
};

const Tool = ({ name, wide, ml }: { name: string; wide?: boolean; ml?: number }) => (
	<ToolButton $wide={wide} $ml={ml}>
		<ToolSvg viewBox="0 0 20 20">{icons[name]}</ToolSvg>
	</ToolButton>
);

const tools = (names: string[]) => names.map(n => <Tool key={n} name={n} />);
const drawing = (names: string[]) => names.map(n => <Tool key={n} name={n} wide />);

const menus: [string, number][] = [
	["File", 37],
	["Edit", 40],
	["View", 46],
	["Insert", 50],
	["Format", 62],
	["Drawing", 69],
	["Window", 69],
	["Help", 40]
];

const tabs: [string, number][] = [
	["SP500 C164", 94],
	["SP500 C164_2_Int", 125],
	["SP500 C55", 84],
	["SP500 C30", 86],
	["SP500 8 Giorni", 105],
	["SP500 4 giorni", 104]
];

const statusCells: [string, number][] = [
	["Acct:", 55],
	["Open Psns:", 91],
	["DT BP:", 62.5],
	["Purch Pwr:", 86.5],
	["Closed P/L:", 94],
	["RT TE:", 59.5],
	["Open P/L:", 84.5]
];

const MinGlyph = () => (
	<svg width="17" height="8" viewBox="0 0 17 8">
		<rect x="0" y="2" width="17" height="5" fill="#fff" stroke="#444" strokeWidth="0.5" />
	</svg>
);

const RestoreGlyph = () => (
	<svg width="20" height="20" viewBox="0 0 20 20">
		<rect x="6" y="1" width="13" height="13" fill="none" stroke="#fff" strokeWidth="1.6" />
		<rect x="1" y="5" width="13" height="14" fill="#8796a4" stroke="#fff" strokeWidth="2" />
		<rect x="5" y="9" width="5" height="5" fill="none" stroke="#333" />
	</svg>
);

const CloseGlyph = () => (
	<svg width="18" height="18" viewBox="0 0 18 18">
		<path d="M2 2l14 14M16 2L2 16" stroke="#fff" strokeWidth="4.5" />
	</svg>
);

const SmallGlyphs = {
	min: <path d="M3 8h7" stroke="#7d8b98" strokeWidth="2" />,
	restore: <path d="M5 2h7v6h-2M2 5h7v6H2zM2 6h7" fill="none" stroke="#7d8b98" />,
	close: <path d="M3 2l7 8M10 2l-7 8" stroke="#7d8b98" strokeWidth="2" />
};

const SmallGlyph = ({ kind }: { kind: keyof typeof SmallGlyphs }) => (
	<svg width="13" height="12" viewBox="0 0 13 12">
		{SmallGlyphs[kind]}
	</svg>
);

const navGlyphs = ["M3 1v7M8 1L4 4.5 8 8z", "M7 1L3 4.5 7 8z", "M3 1l4 3.5L3 8z", "M8 1v7M2 1l4 3.5L2 8z"];

export default function App() {
	return (
		<Desktop>
			<GlobalStyle />

			<TitleBar>
				<TitleIcon viewBox="0 0 20 24">
					<path d="M1 22C-1 14 3 9 6 5c2-3 5-4 7-4 4 3 6 8 6 12 0 4-1 7-3 9-1-5-3-9-5-10-2 3-6 6-10 10z" fill="#2c63c8" />
					<path d="M6 14c0-4 3-8 6-9M9 16c0-3 1-5 3-7" fill="none" stroke="#9fd0ff" strokeWidth="1.4" />
				</TitleIcon>
				<TitleText>{"TradeStation 8.1 - SP500 - SP500 Sito - [Chart Analysis - GS:S&P500  60 min  [CME] S&P500 FUT]"}</TitleText>
				<WindowButtons>
					<WindowButton $w={37}>
						<MinGlyph />
					</WindowButton>
					<WindowButton $w={35}>
						<RestoreGlyph />
					</WindowButton>
					<WindowButton $w={63} $close>
						<CloseGlyph />
					</WindowButton>
				</WindowButtons>
			</TitleBar>

			<MenuBar>
				<MenuIcon viewBox="0 0 19 17">
					<rect width="19" height="17" fill="#101010" />
					<rect width="19" height="2" fill="#2050c0" />
					<path d="M2 12l3-4 2 2 3-5 2 3 3-4 2 3" fill="none" stroke="#30d040" />
					<path d="M1 15h17" stroke="#d02020" />
				</MenuIcon>
				{menus.map(([label, w]) => (
					<MenuItem key={label} $w={w}>
						{label}
					</MenuItem>
				))}
				<MdiButtons>
					<MdiButton>
						<SmallGlyph kind="min" />
					</MdiButton>
					<MdiButton>
						<SmallGlyph kind="restore" />
					</MdiButton>
					<MdiButton>
						<SmallGlyph kind="close" />
					</MdiButton>
				</MdiButtons>
			</MenuBar>

			<Toolbar>
				<Grip $ml={8} $mr={3} />
				{tools(["newDoc", "open", "saveAll", "docCheck", "olive"])}
				<ToolSep />
				{tools(["preview", "print"])}
				<ToolSep />
				{tools(["winBlue", "winGreen", "lock", "satellite", "blocks"])}
				<ToolSep />
				<Combo>
					<span>–</span>
					<ComboArrow />
				</Combo>
				<NextArrow />
				<Tool name="chartFind" ml={8} />
				<Tool name="grayCalc" ml={82} />
				{tools(["grayTable", "yellowTable"])}
				<ToolSep $narrow />
				{tools(["redWave", "arrows", "stack"])}
				<ToolSep $narrow />
				{tools(["docArrow", "boxArrow"])}
				<ToolSep $narrow />
				{tools(["calClock", "clockBars", "darkBars", "blueBars", "candle"])}
				<ToolSep />
				{tools(["barsIn", "barsOut"])}
				<ToolSep />
				{tools(["zoomIn", "zoomOut"])}
				<ToolSep $narrow />
				{tools(["cursor", "chartText"])}
				<ToolSep $narrow />
				<Tool name="hammer" />
				<ToolSep $narrow />
				<Tool name="plusTable" />
				<ToolSep $narrow />
				<Tool name="grayNote" />
				<Grip $ml={12} $mr={2} />
				{drawing([
					"fork", "vLines", "hLines", "calcLines", "arcs", "fan", "steps", "triLines", "angle", "dblArrow", "parallel",
					"arches", "pencil"
				])}
				<ToolSep $narrow />
				{drawing(["curve", "arrowDown", "arrowUp", "circle", "square"])}
				<ToolButton $wide>
					<AbcLabel>abc</AbcLabel>
				</ToolButton>
			</Toolbar>

			<ChartArea>
				<Chart />
				<Legend $top={1}>
					<LegendItem $color="#5252ee">GS:S&amp;P500 - 60 min</LegendItem>
					<LegendItem $color="#5252ee" $gap={16}>CME</LegendItem>
					<LegendItem $color="#fff" $gap={8.5}>09/12/2023</LegendItem>
					<LegendItem $color="#00ee00" $gap={10}>L=4530.00</LegendItem>
					<LegendItem $color="#fff" $gap={9}>Hi=4532.25</LegendItem>
					<LegendItem $color="#fff" $gap={12}>Lo=4524.50</LegendItem>
					<LegendItem $color="#00ee00" $gap={7.5}>C=4530.00</LegendItem>
					<LegendItem $color="#fff" $gap={8.3}>Close</LegendItem>
					<LegendItem $color="#00e4e4" $gap={18.5}>4530.00</LegendItem>
					<LegendItem $color="#fff" $gap={7.8}>Media mobile no lag</LegendItem>
					<LegendItem $color="#0000e0" $gap={26.6}>4520.45</LegendItem>
				</Legend>
				<Legend $top={604}>
					<LegendItem $color="#fff">MACD modif 1</LegendItem>
					<LegendItem $color="#f00000" $gap={19}>-27.34</LegendItem>
					<LegendItem $color="#e8e800" $gap={8}>-56.42</LegendItem>
					<LegendItem $color="#333" $gap={11.5}>29.08</LegendItem>
					<LegendItem $color="#8f8f00" $gap={9.2}>0.00</LegendItem>
				</Legend>
				<ChildButtons>
					<ChildButton>
						<SmallGlyph kind="min" />
					</ChildButton>
					<ChildButton>
						<SmallGlyph kind="restore" />
					</ChildButton>
					<ChildButton>
						<SmallGlyph kind="close" />
					</ChildButton>
				</ChildButtons>
			</ChartArea>

			<ScrollBar>
				<ScrollArrow />
				<ScrollThumb>
					<svg width="8" height="10" viewBox="0 0 8 10">
						<path d="M1 1v8M4 1v8M7 1v8" stroke="#777" />
					</svg>
				</ScrollThumb>
				<ScrollArrow $right />
			</ScrollBar>

			<TabStrip>
				{navGlyphs.map(d => (
					<TabNav key={d}>
						<svg width="10" height="9" viewBox="0 0 10 9">
							<path d={d} fill="#777" stroke="#777" strokeWidth="0.6" />
						</svg>
					</TabNav>
				))}
				<TabRow>
					{tabs.map(([label, w]) => (
						<Tab key={label} $w={w}>
							{label}
						</Tab>
					))}
					<Tab $w={87} $active>
						SP500 Sito
					</Tab>
				</TabRow>
			</TabStrip>

			<StatusBar>
				<StatusHelp>For Help, press F1</StatusHelp>
				{statusCells.map(([label, w]) => (
					<StatusCell key={label} $w={w}>
						{label}
					</StatusCell>
				))}
				<StatusCell $w={87} $green>ORDER BAR</StatusCell>
				<StatusCell $w={68.5} $green>MACROS</StatusCell>
				<StatusCell $w={19.5}>
					<RedDot />
				</StatusCell>
				<StatusCell $w={123}>12/09/2023 14:49</StatusCell>
			</StatusBar>
			<BottomEdge />
		</Desktop>
	);
}
